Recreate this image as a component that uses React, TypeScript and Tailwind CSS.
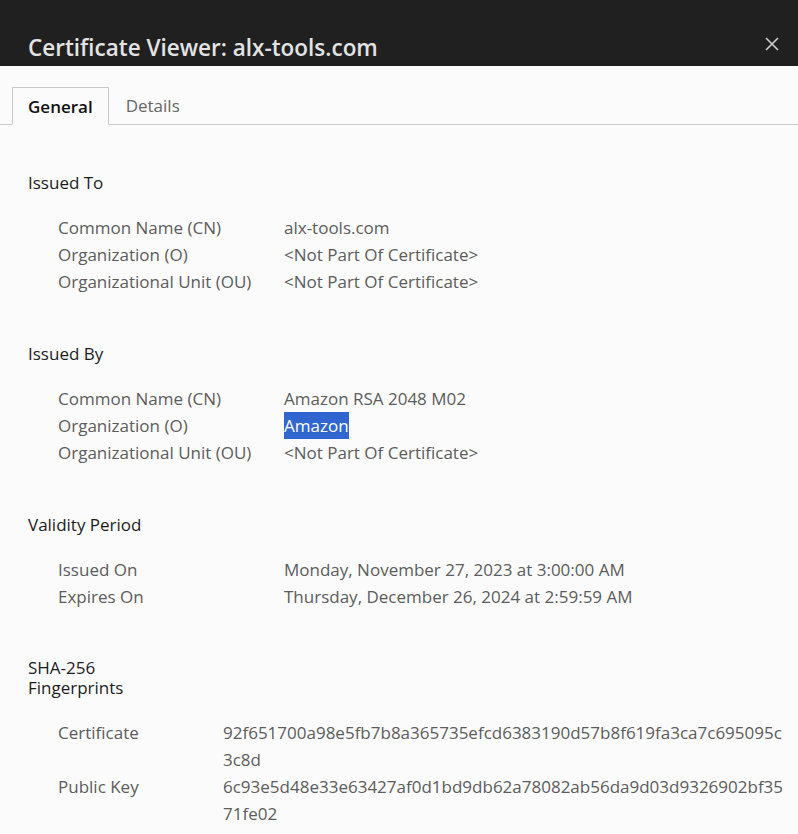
import React from "react";

const font = { fontFamily: '"Open Sans", "Noto Sans", sans-serif' };

type Row = { label: string; value: React.ReactNode };

function Section({
  title,
  rows,
  wide,
  className = "mt-[49px]",
}: {
  title: React.ReactNode;
  rows: Row[];
  wide?: boolean;
  className?: string;
}) {
  return (
    <section className={className}>
      <h2 className="text-[17px] leading-[20px] text-[#1b1b1b]">{title}</h2>
      <div className="mt-[21px] pl-[30px]">
        {rows.map((r, i) => (
          <div key={i} className="flex text-[17px] leading-[27px] text-[#5c5c5c]">
            <div className={wide ? "w-[165px] shrink-0" : "w-[226px] shrink-0"}>{r.label}</div>
            <div className="min-w-0 whitespace-nowrap">{r.value}</div>
          </div>
        ))}
      </div>
    </section>
  );
}

export default function App() {
  return (
    <div style={font} className="w-[798px] h-[834px] overflow-hidden bg-[#fbfbfb]">
      {/* title bar */}
      <div className="h-[66px] bg-[#202020] flex items-end justify-between pl-[28px] pr-[18px] pb-[3px]">
        <h1 className="text-[22.5px] font-semibold text-[#e3e3e3] leading-[30px]">
          Certificate Viewer: alx-tools.com
        </h1>
        <svg width="16" height="16" viewBox="0 0 16 16" className="mb-[11px]">
          <path d="M2 2 L14 14 M14 2 L2 14" stroke="#cfcfcf" strokeWidth="1.6" />
        </svg>
      </div>

      {/* tabs */}
      <div className="mt-[21px] flex items-end border-b border-[#c9c9c9] pl-[12px] h-[38px]">
        <div className="h-[38px] -mb-px px-[15px] pt-[1px] flex items-center border border-[#c9c9c9] border-b-[#fbfbfb] bg-[#fbfbfb] text-[17px] font-semibold text-[#111]">
          General
        </div>
        <div className="h-[38px] px-[17px] pt-[1px] flex items-center text-[17px] text-[#666]">Details</div>
      </div>

      <div className="pl-[28px] pr-[16px] pt-[48px]">
        <Section
          className=""
          title="Issued To"
          rows={[
            { label: "Common Name (CN)", value: "alx-tools.com" },
            { label: "Organization (O)", value: "<Not Part Of Certificate>" },
            { label: "Organizational Unit (OU)", value: "<Not Part Of Certificate>" },
          ]}
        />
        <Section
          title="Issued By"
          rows={[
            { label: "Common Name (CN)", value: "Amazon RSA 2048 M02" },
            {
              label: "Organization (O)",
              value: <span className="bg-[#3165d0] text-white inline-block leading-[27px]">Amazon</span>,
            },
            { label: "Organizational Unit (OU)", value: "<Not Part Of Certificate>" },
          ]}
        />
        <Section
          title="Validity Period"
          rows={[
            { label: "Issued On", value: "Monday, November 27, 2023 at 3:00:00 AM" },
            { label: "Expires On", value: "Thursday, December 26, 2024 at 2:59:59 AM" },
          ]}
        />
        <Section
          wide
          className="mt-[48px]"
          title={
            <>
              SHA-256
              <br />
              Fingerprints
            </>
          }
          rows={[
            {
              label: "Certificate",
              value: (
                <>
                  92f651700a98e5fb7b8a365735efcd6383190d57b8f619fa3ca7c695095c
                  <br />
                  3c8d
                </>
              ),
            },
            {
              label: "Public Key",
              value: (
                <>
                  6c93e5d48e33e63427af0d1bd9db62a78082ab56da9d03d9326902bf35
                  <br />
                  71fe02
                </>
              ),
            },
          ]}
        />
      </div>
    </div>
  );
}
